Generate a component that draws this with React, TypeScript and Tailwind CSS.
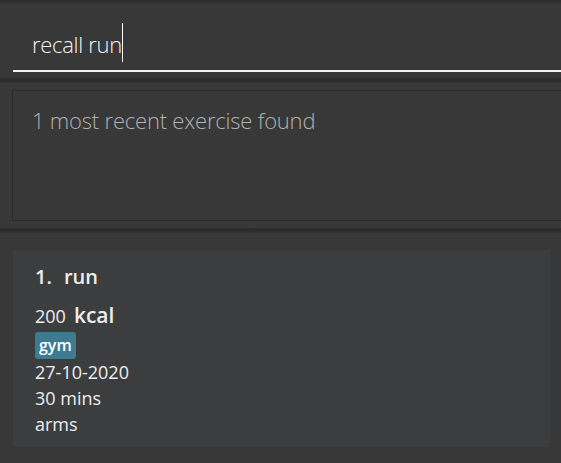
import React from 'react'

const font = { fontFamily: '"Open Sans", "Noto Sans", sans-serif' }

function Separator() {
  return <div className="h-[5px] bg-gradient-to-b from-[#2f2f2f] via-[#2b2b2b] to-[#333333]" />
}

export default function App() {
  return (
    <div className="w-[561px] h-[463px] overflow-hidden bg-[#383838] flex flex-col" style={font}>
      {/* top strip */}
      <div className="h-[4px] bg-gradient-to-b from-[#2c2c2c] to-[#343434]" />

      {/* command box */}
      <div className="h-[74px] pl-[13px] pt-[18px]">
        <div className="h-[50px] border-b-2 border-[#f2f2f2] pl-[19px] flex items-start">
          <span className="text-[22px] leading-[44px] font-light text-[#f4f4f4] tracking-[-0.3px]">recall run</span>
          <span className="w-px h-[39px] bg-white mt-[1px]" />
        </div>
      </div>

      <Separator />

      {/* result display */}
      <div className="h-[145px] pl-[12px] pt-[7px]">
        <div className="h-[131px] border border-[#2a2a2a] border-r-0 pl-[19px] pt-[15px]">
          <p className="text-[22px] leading-[28px] font-light text-[#b0b0b0] tracking-[-0.2px]">1 most recent exercise found</p>
        </div>
      </div>

      <Separator />

      {/* exercise list */}
      <div className="flex-1 pl-[13px] pr-[11px] pt-[17px]">
        <div className="h-[197px] bg-[#3c3d3f] pl-[22px] pt-[14px] text-[#eeeeee]">
          <div className="flex items-baseline text-[20px] leading-[26px] font-semibold">
            <span>1.</span>
            <span className="ml-[12px]">run</span>
          </div>
          <div className="flex items-baseline mt-[13px]">
            <span className="text-[18px] leading-[24px]">200</span>
            <span className="ml-[8px] text-[21px] leading-[24px] font-semibold">kcal</span>
          </div>
          <div className="mt-[4px] flex">
            <span className="bg-[#3e7b91] rounded-[3px] px-[4px] text-[16px] leading-[27px] font-semibold text-white">gym</span>
          </div>
          <div className="text-[18px] leading-[26px]">
            <p>27-10-2020</p>
            <p>30 mins</p>
            <p>arms</p>
          </div>
        </div>
      </div>
    </div>
  )
}
